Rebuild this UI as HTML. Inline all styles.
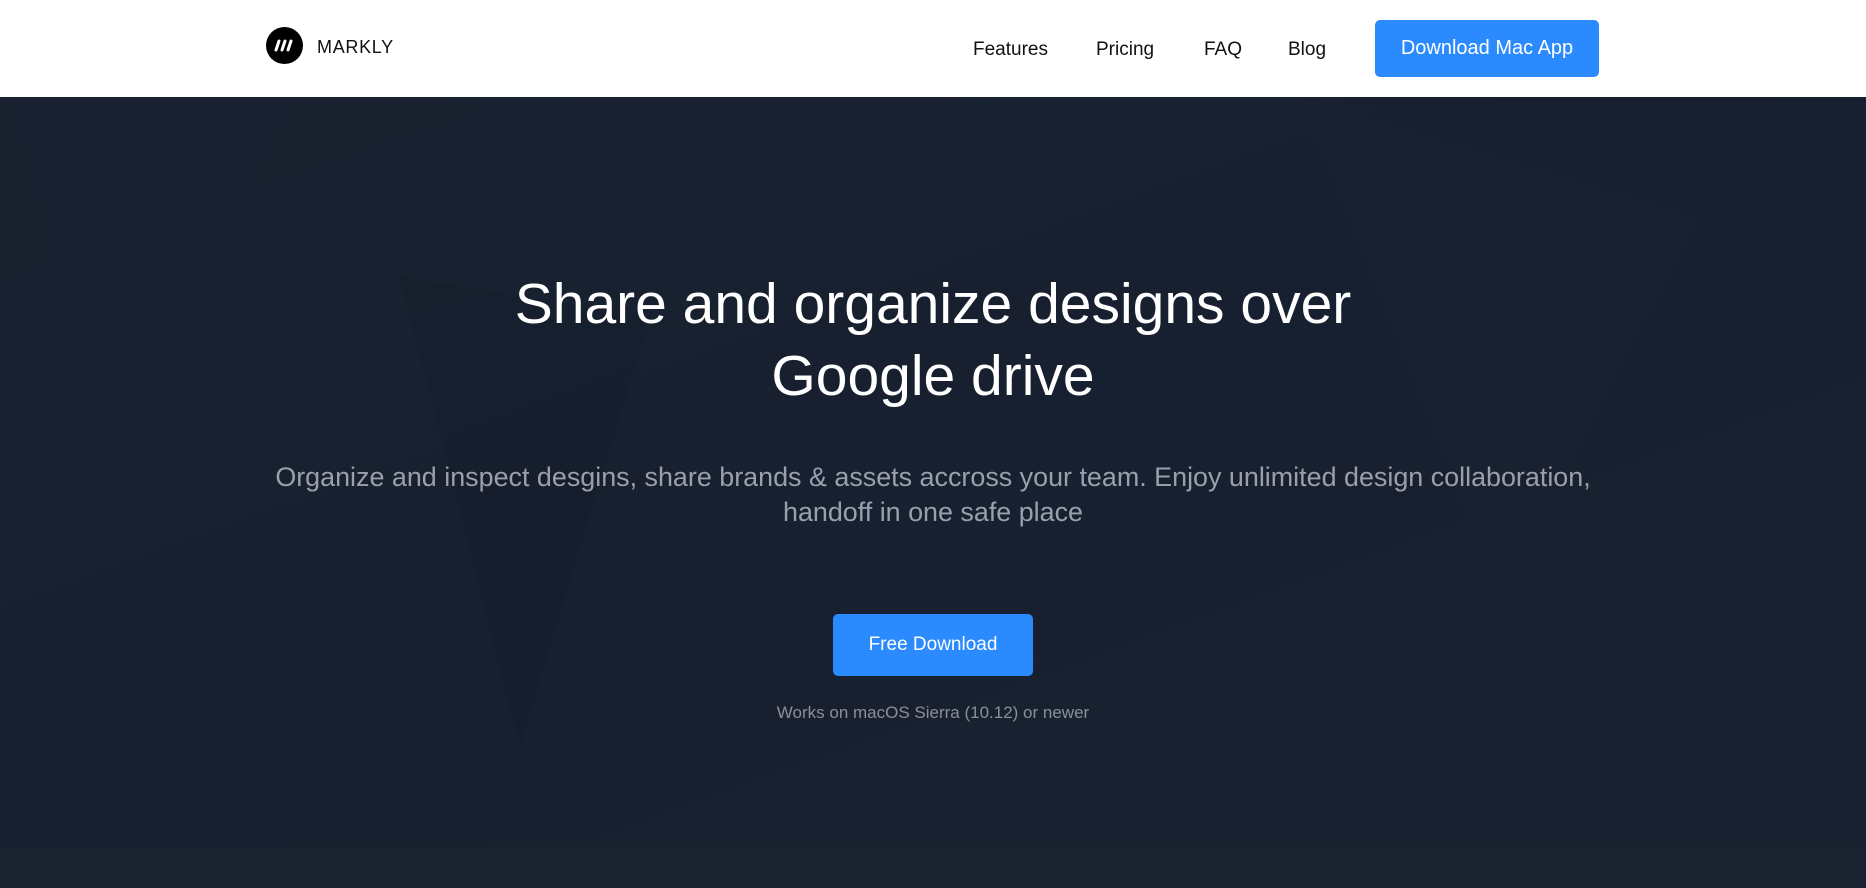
<!DOCTYPE html>
<html><head><meta charset="utf-8"><style>
*{margin:0;padding:0;box-sizing:border-box}
body{width:1866px;height:888px;overflow:hidden;font-family:"Liberation Sans",sans-serif;background:#18202d}
header{position:absolute;top:0;left:0;width:1866px;height:97px;background:#fff}
.logo{position:absolute;left:266px;top:27px;width:37px;height:37px;border-radius:50%;background:#000}
.brand{position:absolute;left:317px;top:37px;font-size:18px;letter-spacing:0.7px;color:#111}
.nav{position:absolute;top:39px;font-size:19px;color:#111}
.btn{position:absolute;background:#2b8afe;color:#fff;border-radius:5px;text-align:center}
.hero{position:absolute;top:97px;left:0;width:1866px;height:791px;background:linear-gradient(160deg,#1a2230 0%,#172030 50%,#1a2231 100%);overflow:hidden}
h1{position:absolute;top:268px;left:0;width:1866px;text-align:center;font-weight:300;font-size:57px;line-height:72px;color:#fff}
p.sub{position:absolute;top:460px;left:0;width:1866px;text-align:center;font-size:26.9px;line-height:35px;color:#9aa0aa}
.note{position:absolute;top:703px;left:0;width:1866px;text-align:center;font-size:17px;color:#8a8f99}
</style></head><body>
<div class="hero">
<svg width="1866" height="791" style="position:absolute;left:0;top:0">
<polygon points="0,0 300,0 120,400" fill="#1c2433" opacity=".25"/>
<polygon points="400,180 650,220 520,650" fill="#141c29" opacity=".3"/>
<polygon points="1300,0 1700,120 1500,500" fill="#1d2534" opacity=".25"/>
<polygon points="0,750 1866,750 1866,791 0,791" fill="#1b2331"/>
</svg>
</div>
<header>
<div class="logo"><svg width="37" height="37" viewBox="0 0 37 37"><g stroke="#fff" stroke-width="3" stroke-linecap="round"><line x1="10" y1="23" x2="13" y2="14"/><line x1="16" y1="23" x2="19" y2="14"/><line x1="22" y1="23" x2="25" y2="14"/></g></svg></div>
<div class="brand">MARKLY</div>
<div class="nav" style="left:973px">Features</div>
<div class="nav" style="left:1096px">Pricing</div>
<div class="nav" style="left:1204px">FAQ</div>
<div class="nav" style="left:1288px">Blog</div>
<div class="btn" style="left:1375px;top:20px;width:224px;height:57px;line-height:57px;font-size:20px">Download Mac App</div>
</header>
<h1>Share and organize designs over<br>Google drive</h1>
<p class="sub">Organize and inspect desgins, share brands &amp; assets accross your team. Enjoy unlimited design collaboration,<br>handoff in one safe place</p>
<div class="btn" style="left:833px;top:614px;width:200px;height:62px;line-height:62px;font-size:19px">Free Download</div>
<div class="note">Works on macOS Sierra (10.12) or newer</div>
</body></html>
